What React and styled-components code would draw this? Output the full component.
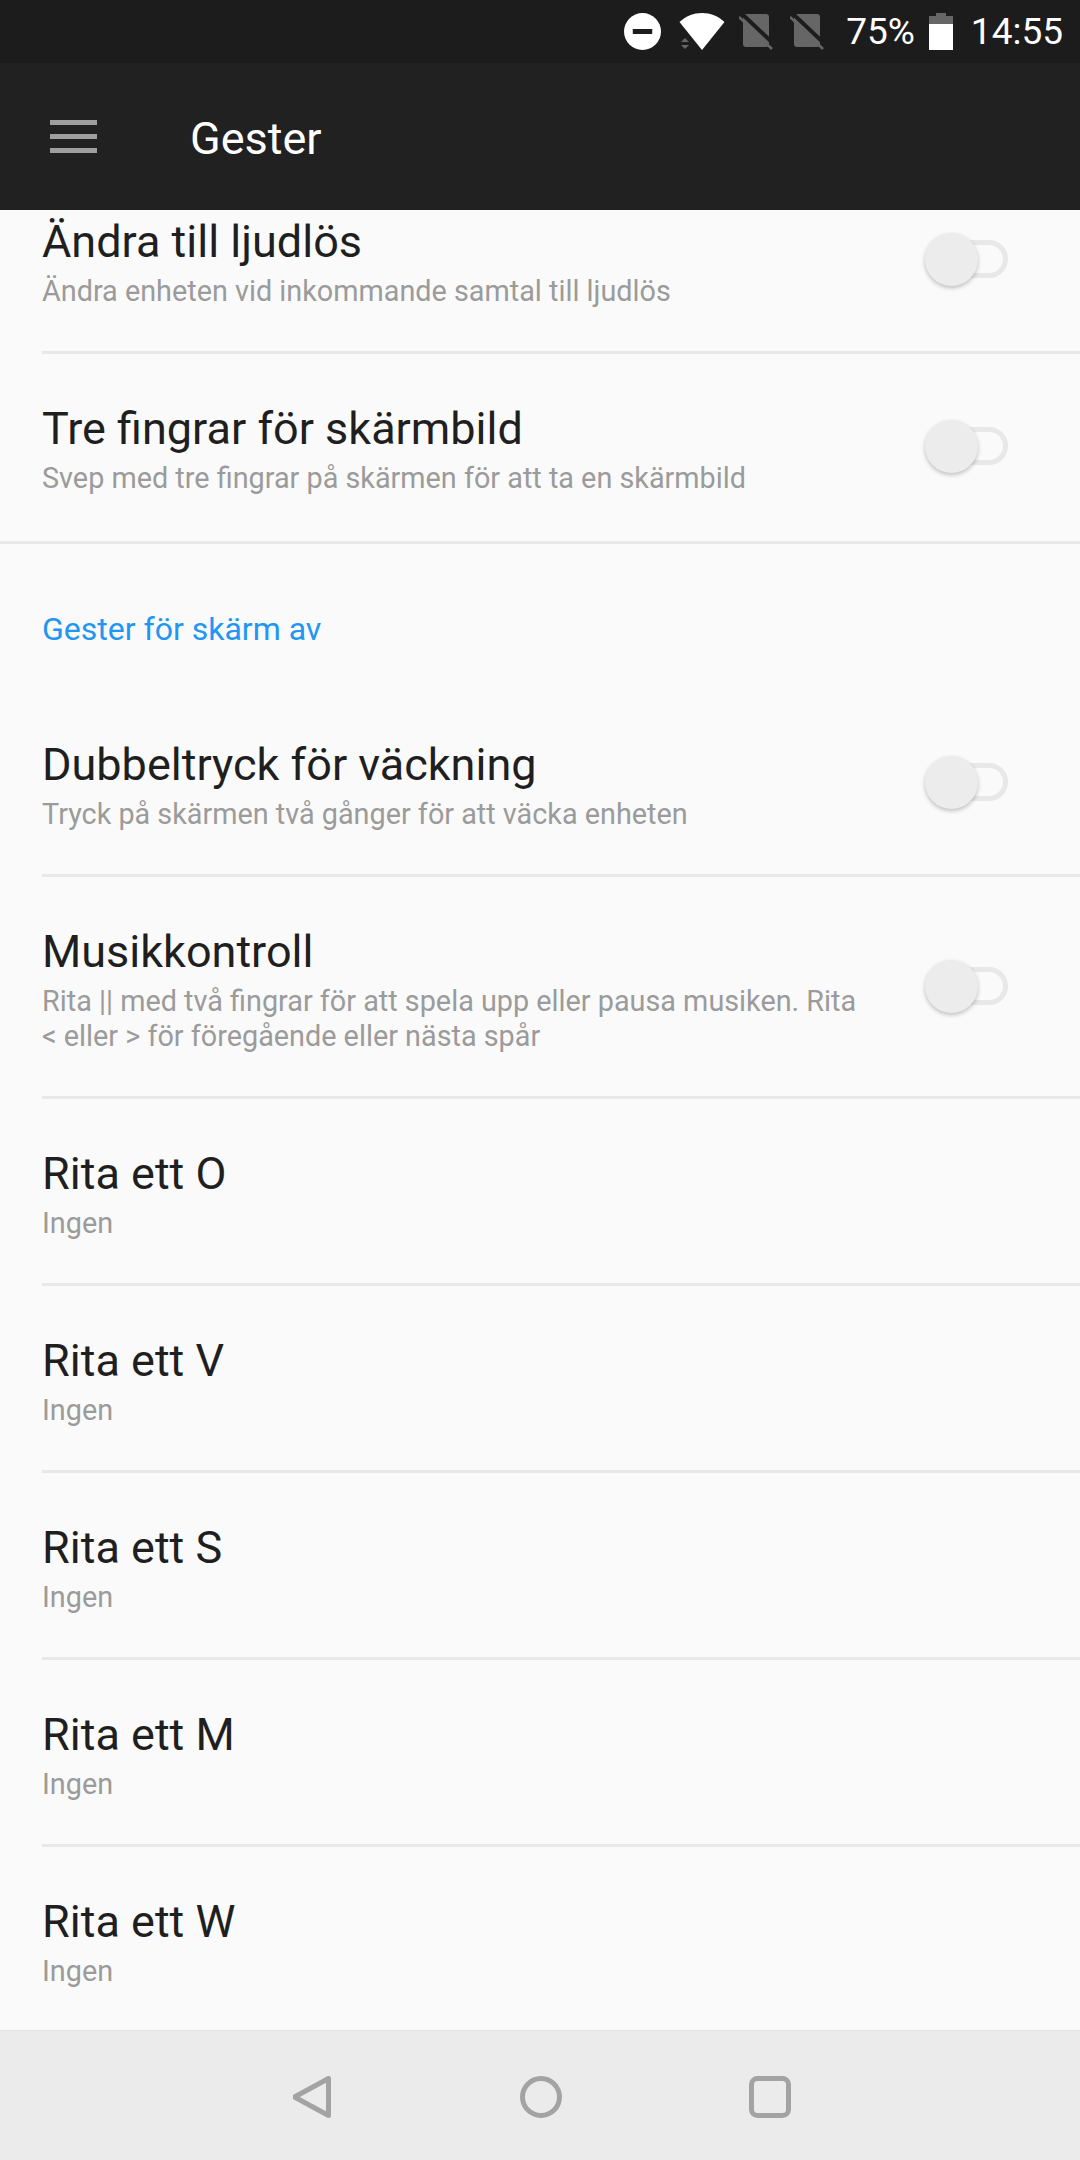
import React from 'react';
import styled, { createGlobalStyle } from 'styled-components';

const GlobalStyle = createGlobalStyle`
    html, body {
        margin: 0;
        padding: 0;
        background: #fafafa;
    }
    * {
        box-sizing: border-box;
    }
`;

const topRows = [
    { title: 'Ändra till ljudlös', sub: ['Ändra enheten vid inkommande samtal till ljudlös'], toggle: true },
    { title: 'Tre fingrar för skärmbild', sub: ['Svep med tre fingrar på skärmen för att ta en skärmbild'], toggle: true },
];

const offRows = [
    { title: 'Dubbeltryck för väckning', sub: ['Tryck på skärmen två gånger för att väcka enheten'], toggle: true },
    {
        title: 'Musikkontroll',
        sub: ['Rita || med två fingrar för att spela upp eller pausa musiken. Rita', '< eller > för föregående eller nästa spår'],
        toggle: true,
    },
    { title: 'Rita ett O', sub: ['Ingen'] },
    { title: 'Rita ett V', sub: ['Ingen'] },
    { title: 'Rita ett S', sub: ['Ingen'] },
    { title: 'Rita ett M', sub: ['Ingen'] },
    { title: 'Rita ett W', sub: ['Ingen'] },
];

function SimIcon() {
    return (
        <SimSvg viewBox="0 0 34 38">
            <rect x="4" y="1" width="26" height="33" rx="3" fill="#666" />
            <path d="M1 -1L37 33" stroke="#1c1c1c" strokeWidth="4" />
            <path d="M0 4L33 36" stroke="#666" strokeWidth="2.6" />
        </SimSvg>
    );
}

function SettingRow({ title, sub, toggle, last }) {
    return (
        <Row $last={last} $tall={sub.length > 1}>
            <RowText>
                <Title>{title}</Title>
                {sub.map(line => <Sub key={line}>{line}</Sub>)}
            </RowText>
            {toggle && (
                <Toggle>
                    <Track />
                    <Thumb />
                </Toggle>
            )}
        </Row>
    );
}

export default function App() {
    return (
        <Screen>
            <GlobalStyle />
            <StatusBar>
                <svg width="37" height="37" viewBox="0 0 38 38">
                    <circle cx="19" cy="19" r="19" fill="#fff" />
                    <rect x="9" y="16.5" width="20" height="5" rx="0.5" fill="#1c1c1c" />
                </svg>
                <WifiSvg viewBox="0 0 46 38">
                    <path d="M0.500 9C7 3 14.500 0 23 0s16 3 22.500 9L23 37z" fill="#fff" />
                    <path d="M2 29l4-4 4 4zM2 32l4 4 4-4z" fill="#666" />
                </WifiSvg>
                <SimGroup>
                    <SimIcon />
                    <SimIcon />
                </SimGroup>
                <Percent>75%</Percent>
                <svg width="24" height="37" viewBox="0 0 24 37">
                    <path d="M7 0h10v3H24v34H0V3h7z" fill="#fff" />
                    <path d="M7 0h10v3H24v8H0V3h7z" fill="#666" />
                </svg>
                <Clock>14:55</Clock>
            </StatusBar>
            <Toolbar>
                <Burger>
                    <span />
                    <span />
                    <span />
                </Burger>
                <ToolbarTitle>Gester</ToolbarTitle>
            </Toolbar>
            <Scroller>
                <ScrollInner>
                    {topRows.map((row, i) => (
                        <SettingRow key={row.title} {...row} last={i === topRows.length - 1} />
                    ))}
                    <Section>Gester för skärm av</Section>
                    {offRows.map((row, i) => (
                        <SettingRow key={row.title} {...row} last={i === offRows.length - 1} />
                    ))}
                </ScrollInner>
            </Scroller>
            <NavBar>
                <svg width="40" height="42" viewBox="0 0 40 42">
                    <path d="M35.500 2.500v37L1.500 21z" fill="none" stroke="#a3a3a3" strokeWidth="5" strokeLinejoin="round" />
                </svg>
                <svg width="42" height="42" viewBox="0 0 42 42">
                    <circle cx="21" cy="21" r="18.500" fill="none" stroke="#a3a3a3" strokeWidth="5" />
                </svg>
                <svg width="42" height="42" viewBox="0 0 42 42">
                    <rect x="2.500" y="2.500" width="37" height="37" rx="6" fill="none" stroke="#a3a3a3" strokeWidth="5" />
                </svg>
            </NavBar>
        </Screen>
    );
}

const Screen = styled.div`
    width: 1080px;
    height: 2160px;
    display: flex;
    flex-direction: column;
    overflow: hidden;
    background: #fafafa;
    font-family: Roboto, "Noto Sans", sans-serif;
`;

const StatusBar = styled.div`
    height: 63px;
    flex: none;
    display: flex;
    align-items: center;
    justify-content: flex-end;
    padding-right: 17px;
    background: #1c1c1c;
    color: #fff;
    font-size: 37px;
`;

const WifiSvg = styled.svg`
    width: 46px;
    height: 38px;
    margin-left: 18px;
`;

const SimGroup = styled.div`
    display: flex;
    gap: 17px;
    margin-left: 14px;
`;

const SimSvg = styled.svg`
    width: 34px;
    height: 38px;
    display: block;
`;

const Percent = styled.span`
    margin-left: 22px;
    margin-right: 14px;
`;

const Clock = styled.span`
    margin-left: 18px;
`;

const Toolbar = styled.div`
    height: 147px;
    flex: none;
    display: flex;
    align-items: center;
    background: #212121;
`;

const Burger = styled.div`
    width: 47px;
    margin-left: 50px;
    display: flex;
    flex-direction: column;
    gap: 9px;

    span {
        display: block;
        height: 5px;
        background: #9e9e9e;
    }
`;

const ToolbarTitle = styled.div`
    margin-left: 93px;
    padding-top: 4px;
    color: #fff;
    font-size: 45px;
`;

const Scroller = styled.div`
    flex: 1;
    min-height: 0;
    overflow: hidden;
`;

const ScrollInner = styled.div`
    margin-top: -43px;
`;

const Row = styled.div`
    position: relative;
    height: ${p => (p.$tall ? '222px' : '187px')};
    display: flex;
    align-items: center;
    padding: 0 0 3px 42px;
    ${p => !p.$last && `
        &::after {
            content: '';
            position: absolute;
            left: 42px;
            right: 0;
            bottom: 0;
            height: 3px;
            background: #e8e8e8;
        }
    `}
`;

const RowText = styled.div`
    flex: 1;
    padding-top: 5px;
`;

const Title = styled.div`
    font-size: 45px;
    line-height: 56px;
    margin-bottom: 4px;
    color: #1f1f1f;
`;

const Sub = styled.div`
    font-size: 28.8px;
    line-height: 35px;
    color: #9b9b9b;
`;

const Toggle = styled.div`
    position: relative;
    width: 83px;
    height: 53px;
    margin-right: 72px;
`;

const Track = styled.div`
    position: absolute;
    left: 10px;
    top: 7px;
    width: 73px;
    height: 38px;
    border: 5px solid #e8e8e8;
    border-radius: 19px;
`;

const Thumb = styled.div`
    position: absolute;
    left: 0;
    top: 0;
    width: 53px;
    height: 53px;
    border-radius: 50%;
    background: #ececec;
    box-shadow: 0 2px 4px rgba(0, 0, 0, 0.24);
`;

const Section = styled.div`
    height: 149px;
    border-top: 3px solid #e8e8e8;
    padding: 66px 0 0 42px;
    font-size: 32px;
    line-height: 38px;
    color: #2196f3;
`;

const NavBar = styled.div`
    height: 129px;
    flex: none;
    display: flex;
    align-items: center;
    justify-content: center;
    gap: 187px;
    padding: 3px 0 0 3px;
    background: #ebebeb;
    box-shadow: 0 -1px 0 #e2e2e2;
`;
